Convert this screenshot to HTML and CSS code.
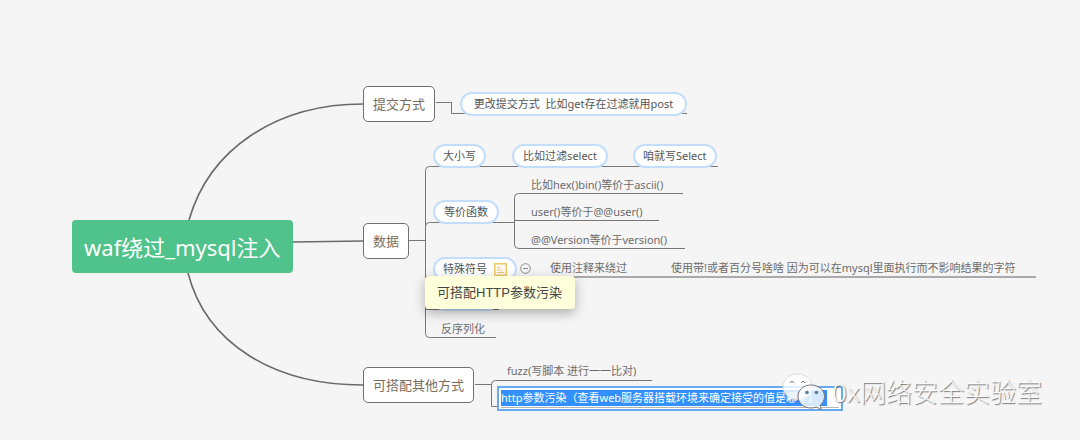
FILE: index.html
```html
<!DOCTYPE html>
<html lang="zh-CN">
<head>
  <meta charset="UTF-8" />
  <meta name="viewport" content="width=device-width, initial-scale=1.0" />
  <title>waf绕过_mysql注入</title>
  <link rel="stylesheet" href="styles.css">
</head>
<body>
  <main class="mindmap">
    <svg class="links" width="1080" height="440" viewBox="0 0 1080 440" aria-hidden="true">
      <!-- root to branches -->
      <g class="link-main">
        <path d="M189 220C209 150 275 104 363 104" />
        <path d="M293 242L363 241" />
        <path d="M188 273C206 343 273 385 363 385" />
      </g>
      <!-- branches to topics -->
      <g class="link-sub">
        <path d="M436 102.500H451.500V113.500H687" />
        <path d="M409 240.500H425.500" />
        <path d="M718 166.500H429.500Q425.500 166.500 425.500 170.500V333.500Q425.500 337.500 429.500 337.500H496" />
        <path d="M425.500 226.500Q425.500 222.500 429.500 222.500H514.500" />
        <path d="M425.500 309.500H499" />
        <path d="M683 193.500H518.500Q514.500 193.500 514.500 197.500V244.500Q514.500 248.500 518.500 248.500H685" />
        <path d="M514.500 220.500H659" />
        <path d="M475 384.500H491.500" />
        <path d="M652 380.500H495.500Q491.500 380.500 491.500 384.500V406.500H500" />
      </g>
      <path class="link-wide" d="M426 277H1036" />
    </svg>

    <div class="root">waf绕过_mysql注入</div>

    <div class="branch branch-submit">提交方式</div>
    <div class="pill pill-change">更改提交方式&nbsp; 比如get存在过滤就用post</div>

    <div class="branch branch-data">数据</div>
    <div class="pill pill-case">大小写</div>
    <div class="pill pill-filter">比如过滤select</div>
    <div class="pill pill-write">咱就写Select</div>

    <div class="pill pill-func">等价函数</div>
    <div class="topic topic-hex">比如hex()bin()等价于ascii()</div>
    <div class="topic topic-user">user()等价于@@user()</div>
    <div class="topic topic-version">@@Version等价于version()</div>

    <div class="pill pill-symbol">特殊符号
      <svg class="note" width="13" height="13" viewBox="0 0 13 13" aria-hidden="true">
        <rect x="0.750" y="0.750" width="11.500" height="11.500" />
        <path d="M3 4.500H6M3 7H8M3 9.500H10" />
      </svg>
    </div>
    <button class="collapse" type="button" aria-label="收起">
      <svg width="11" height="11" viewBox="0 0 11 11" aria-hidden="true">
        <circle cx="5.500" cy="5.500" r="4.800" />
        <path d="M3 5.500H8" />
      </svg>
    </button>
    <div class="topic topic-comment">使用注释来绕过</div>
    <div class="topic topic-percent">使用带!或者百分号啥啥 因为可以在mysql里面执行而不影响结果的字符</div>

    <div class="pill pill-covered"></div>
    <div class="topic topic-serial">反序列化</div>
    <div class="tooltip" role="tooltip">可搭配HTTP参数污染</div>

    <div class="branch branch-other">可搭配其他方式</div>
    <div class="topic topic-fuzz">fuzz(写脚本 进行一一比对)</div>
    <div class="editor">
      <input type="text" aria-label="主题" value="http参数污染（查看web服务器搭载环境来确定接受的值是哪个）" />
    </div>

    <div class="watermark">
      <svg width="44" height="38" viewBox="0 0 44 38" aria-hidden="true">
        <path class="bubble" d="M15.500 1C7 1 1 6.500 1 13.500C1 18 3 21 6.500 23.500L5 28.500L10 25.500C12 26.200 14 26.500 15.500 26.500C24 26.500 30 21 30 13.500C30 6.500 24 1 15.500 1Z" />
        <path class="bubble bubble-front" d="M29 12C21.500 12 16 17 16 23.500C16 30 21.500 35 29 35C31 35 33 34.600 34.500 34L39.500 37L38 32.500C40.800 30.300 42.500 27 42.500 23.500C42.500 17 36.500 12 29 12Z" />
        <path class="eye" d="M8 10Q10 6.500 12 10M19 10Q21 6.500 23 10" />
        <circle class="pupil" cx="25" cy="19.500" r="1.800" />
        <circle class="pupil" cx="34.500" cy="19.500" r="1.800" />
      </svg>
      <span>0x网络安全实验室</span>
    </div>
  </main>
</body>
</html>
```
FILE: styles.css
```css
* {
  box-sizing: border-box;
}
body {
  margin: 0;
  background: #f5f5f5;
  font-family: "Noto Sans", "Noto Sans CJK SC", sans-serif;
  font-size: 11px;
  line-height: 20px;
  color: #6c6c6c;
}
.mindmap {
  position: relative;
  min-height: 440px;
  overflow: hidden;
}
.links {
  position: absolute;
  top: 0;
  left: 0;
  fill: none;
}
.link-main {
  stroke: #6a6a6a;
  stroke-width: 1.6;
}
.link-sub {
  stroke: #777;
  stroke-width: 1;
}
.link-wide {
  stroke: #aaa;
  stroke-width: 2;
}

/* nodes */
.root,
.branch,
.pill,
.topic,
.tooltip,
.collapse,
.editor,
.watermark {
  position: absolute;
  white-space: nowrap;
}
.root {
  left: 72px;
  top: 220px;
  padding: 2px 12px 0;
  border-radius: 4px;
  background: #50c28b;
  color: #fff;
  font-size: 22px;
  line-height: 51px;
}
.branch {
  left: 363px;
  padding: 0 9px;
  border: 1px solid #707070;
  border-radius: 5px;
  background: #fff;
  color: #7a6c5c;
  font-size: 13px;
  line-height: 34px;
}
.branch-submit { top: 86px; }
.branch-data { top: 223px; }
.branch-other { top: 367px; }

.pill {
  display: flex;
  align-items: center;
  justify-content: center;
  gap: 7px;
  height: 24px;
  padding: 0 8px;
  border: 2px solid #c2defc;
  border-radius: 12px;
  background: #fff;
  color: #555;
}
.pill-change { left: 460px; top: 92px; min-width: 227px; }
.pill-case { left: 433px; top: 144px; }
.pill-filter { left: 512px; top: 144px; min-width: 96px; }
.pill-write { left: 633px; top: 144px; }
.pill-func { left: 433px; top: 200px; min-width: 66px; }
.pill-symbol { left: 433px; top: 257px; }
.pill-covered { left: 433px; top: 287px; width: 66px; }

.topic-hex { left: 531px; top: 175px; }
.topic-user { left: 531px; top: 202px; }
.topic-version { left: 531px; top: 230px; }
.topic-comment { left: 550px; top: 258px; }
.topic-percent { left: 671px; top: 258px; }
.topic-serial { left: 441px; top: 319px; }
.topic-fuzz { left: 507px; top: 361px; }

.note {
  fill: #fffaf0;
  stroke: #ecc965;
  stroke-width: 1.5;
}
.note path {
  stroke-width: 1;
}
.collapse {
  left: 520px;
  top: 263px;
  display: flex;
  padding: 0;
  border: none;
  background: none;
}
.collapse svg {
  fill: none;
  stroke: #888;
}
.tooltip {
  left: 425px;
  top: 276px;
  padding: 0 13px 0 12px;
  border-radius: 4px;
  background: #ffffdc;
  box-shadow: 0 4px 12px rgba(0, 0, 0, 0.3);
  color: #444;
  font-family: "Liberation Sans", "Noto Sans CJK SC", sans-serif;
  font-size: 13px;
  line-height: 33px;
}

/* topic being edited, its text selected */
.editor {
  left: 497px;
  top: 386px;
  width: 346px;
  padding: 2px 2px 1px;
  border: 2px solid #68aaf2;
  background: #fff;
}
.editor::after {
  content: "";
  display: block;
  margin-top: 1px;
  border-top: 1px solid #b5b5b5;
}
.editor input {
  display: block;
  width: 326px;
  height: 16px;
  padding: 0;
  border: none;
  background: #3390ff;
  color: #fff;
  font: inherit;
  line-height: 16px;
}

.watermark {
  left: 782px;
  top: 372px;
  display: flex;
  align-items: center;
  gap: 6px;
  color: #fafafa;
  font-size: 26px;
  font-weight: 300;
  line-height: 40px;
  text-shadow: 1px 1px 1px #777;
}
.bubble {
  fill: rgba(255, 255, 255, 0.8);
  stroke: #ddd;
}
.bubble-front {
  stroke: #777;
}
.eye {
  fill: none;
  stroke: #777;
}
.pupil {
  fill: #5d7a9a;
}
```
